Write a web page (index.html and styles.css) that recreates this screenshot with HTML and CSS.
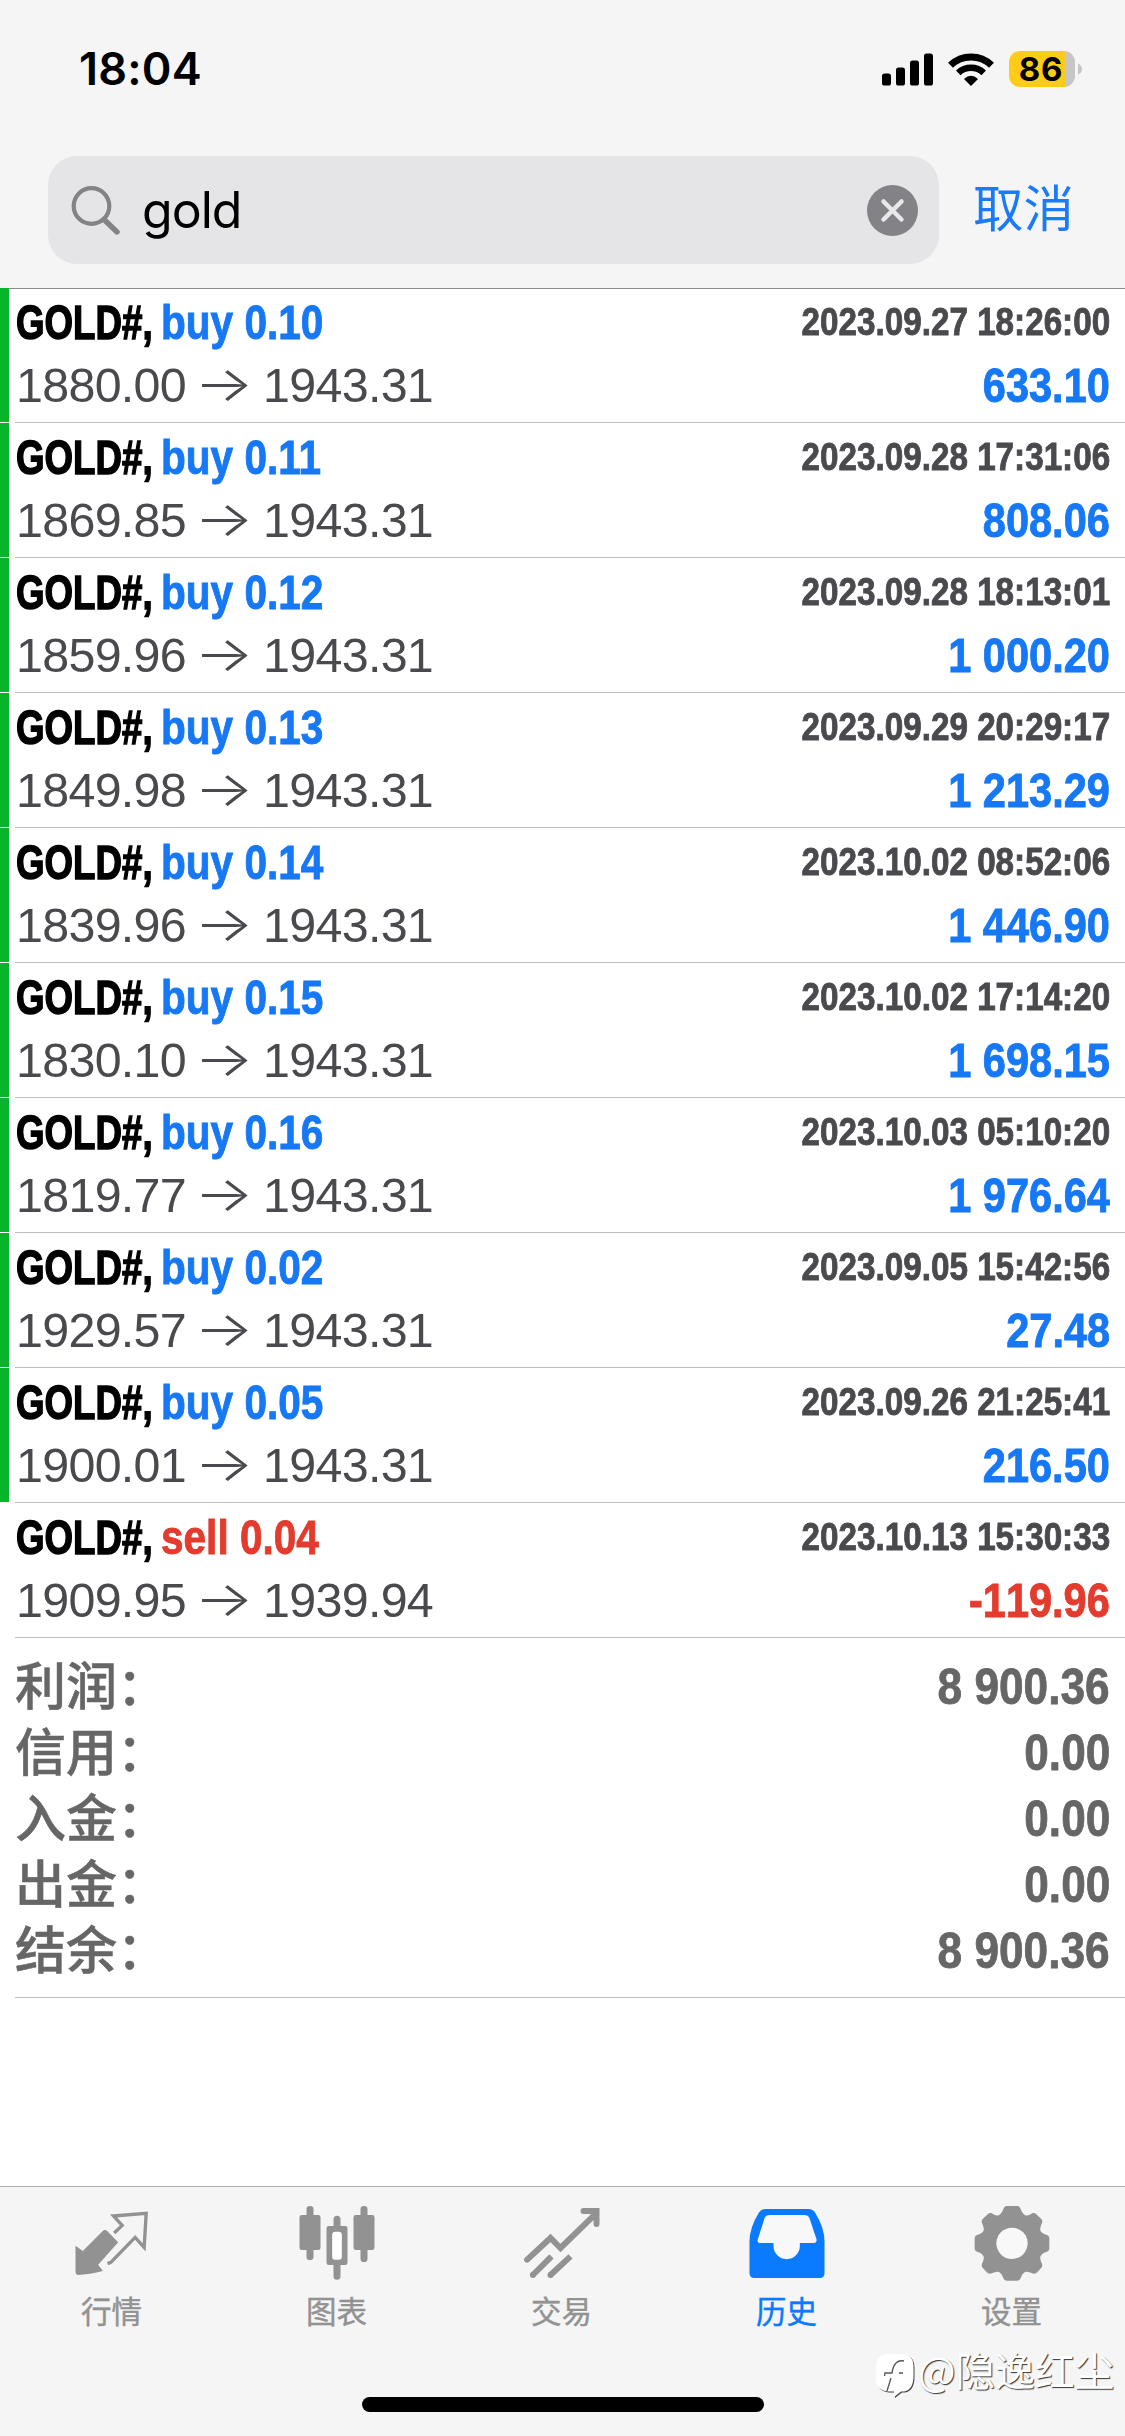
FILE: index.html
```html
<!DOCTYPE html>
<html lang="zh-CN">
<head>
<meta charset="utf-8">
<title>历史</title>
<link rel="stylesheet" href="styles.css">
</head>
<body>
<div class="screen">
  <header class="header">
    <div class="status">
      <span class="clock">18:04</span>
      <div class="indicators">
        <svg class="signal" viewBox="0 0 52 34"><rect x="0" y="21.500" width="9" height="12" rx="2.600"/><rect x="14" y="15.500" width="9" height="18" rx="2.600"/><rect x="28" y="8.500" width="9" height="25" rx="2.600"/><rect x="42" y="1.500" width="9" height="32" rx="2.600"/></svg>
        <svg class="wifi" viewBox="0 0 46 34"><g fill="none" stroke="#000"><path d="M2.500 13.200A29.500 29.500 0 0 1 43.500 13.200" stroke-width="7"/><path d="M10.300 20.800A18.500 18.500 0 0 1 35.700 20.800" stroke-width="6.600"/></g><path d="M23 34L16 27Q23 20.500 30 27Z"/></svg>
        <div class="battery"><span class="level">86</span></div>
        <svg class="nub" viewBox="0 0 5 14"><path d="M0 0Q5 2 5 7T0 14Z" fill="#c6c6c8"/></svg>
      </div>
    </div>
    <div class="search">
      <div class="field">
        <svg class="glass" viewBox="0 0 50 50"><circle cx="20.500" cy="21" r="17.800" stroke-width="4.200"/><path d="M33 34.500L46 47" stroke-width="5.400"/></svg>
        <span class="query">gold</span>
        <svg class="clear" viewBox="0 0 51 51"><circle cx="25.500" cy="25.500" r="25.500"/><path d="M16.500 16.500L34.500 34.500M34.500 16.500L16.500 34.500"/></svg>
      </div>
      <span class="cancel">取消</span>
    </div>
  </header>

  <main class="list">
    <div class="deal win"><div class="line"><span class="symbol"><b>GOLD#,</b></span><b class="side buy">buy 0.10</b><b class="time">2023.09.27 18:26:00</b></div><div class="line"><span class="price">1880.00</span><span class="arrow">→</span><span class="price">1943.31</span><b class="profit buy">633.10</b></div></div>
    <div class="deal win"><div class="line"><span class="symbol"><b>GOLD#,</b></span><b class="side buy">buy 0.11</b><b class="time">2023.09.28 17:31:06</b></div><div class="line"><span class="price">1869.85</span><span class="arrow">→</span><span class="price">1943.31</span><b class="profit buy">808.06</b></div></div>
    <div class="deal win"><div class="line"><span class="symbol"><b>GOLD#,</b></span><b class="side buy">buy 0.12</b><b class="time">2023.09.28 18:13:01</b></div><div class="line"><span class="price">1859.96</span><span class="arrow">→</span><span class="price">1943.31</span><b class="profit buy">1 000.20</b></div></div>
    <div class="deal win"><div class="line"><span class="symbol"><b>GOLD#,</b></span><b class="side buy">buy 0.13</b><b class="time">2023.09.29 20:29:17</b></div><div class="line"><span class="price">1849.98</span><span class="arrow">→</span><span class="price">1943.31</span><b class="profit buy">1 213.29</b></div></div>
    <div class="deal win"><div class="line"><span class="symbol"><b>GOLD#,</b></span><b class="side buy">buy 0.14</b><b class="time">2023.10.02 08:52:06</b></div><div class="line"><span class="price">1839.96</span><span class="arrow">→</span><span class="price">1943.31</span><b class="profit buy">1 446.90</b></div></div>
    <div class="deal win"><div class="line"><span class="symbol"><b>GOLD#,</b></span><b class="side buy">buy 0.15</b><b class="time">2023.10.02 17:14:20</b></div><div class="line"><span class="price">1830.10</span><span class="arrow">→</span><span class="price">1943.31</span><b class="profit buy">1 698.15</b></div></div>
    <div class="deal win"><div class="line"><span class="symbol"><b>GOLD#,</b></span><b class="side buy">buy 0.16</b><b class="time">2023.10.03 05:10:20</b></div><div class="line"><span class="price">1819.77</span><span class="arrow">→</span><span class="price">1943.31</span><b class="profit buy">1 976.64</b></div></div>
    <div class="deal win"><div class="line"><span class="symbol"><b>GOLD#,</b></span><b class="side buy">buy 0.02</b><b class="time">2023.09.05 15:42:56</b></div><div class="line"><span class="price">1929.57</span><span class="arrow">→</span><span class="price">1943.31</span><b class="profit buy">27.48</b></div></div>
    <div class="deal win"><div class="line"><span class="symbol"><b>GOLD#,</b></span><b class="side buy">buy 0.05</b><b class="time">2023.09.26 21:25:41</b></div><div class="line"><span class="price">1900.01</span><span class="arrow">→</span><span class="price">1943.31</span><b class="profit buy">216.50</b></div></div>
    <div class="deal"><div class="line"><span class="symbol"><b>GOLD#,</b></span><b class="side sell">sell 0.04</b><b class="time">2023.10.13 15:30:33</b></div><div class="line"><span class="price">1909.95</span><span class="arrow">→</span><span class="price">1939.94</span><b class="profit sell">-119.96</b></div></div>

    <div class="summary">
      <div class="total"><span class="name">利润：</span><b class="sum">8 900.36</b></div>
      <div class="total"><span class="name">信用：</span><b class="sum">0.00</b></div>
      <div class="total"><span class="name">入金：</span><b class="sum">0.00</b></div>
      <div class="total"><span class="name">出金：</span><b class="sum">0.00</b></div>
      <div class="total"><span class="name">结余：</span><b class="sum">8 900.36</b></div>
    </div>
  </main>

  <nav class="tabs">
    <div class="tab">
      <svg class="icon" viewBox="214.500 99 240 240"><path d="M225 227L247 243L306 184Q313 176 320 183L353 217L293 284L307 303Q268 314 232 315Q225 314 225 307Z"/><path class="outline" d="M341 189L365 166L339 138L437 130L431 232L404 202L331 277L321 281" stroke-width="10"/></svg>
      <span class="label">行情</span>
    </div>
    <div class="tab">
      <svg class="icon" viewBox="889.500 99 240 240"><rect x="897" y="135" width="63" height="105" rx="7"/><rect x="918" y="108" width="21" height="162" rx="10"/><rect x="1059" y="135" width="63" height="105" rx="7"/><rect x="1080" y="108" width="21" height="168" rx="10"/><path d="M999 168V148a10.500 10.500 0 0 1 21 0V168H1034q7 0 7 7V278q0 7-7 7H1020V319a10.500 10.500 0 0 1-21 0V285H985q-7 0-7-7V175q0-7 7-7Z"/><rect x="995" y="185" width="29" height="84" rx="9" fill="#fff"/></svg>
      <span class="label">图表</span>
    </div>
    <div class="tab">
      <svg class="icon" viewBox="304.500 99 240 240"><g class="outline" stroke-width="18"><path d="M320 269L390 204L420 234L526 131M489 123H528V162" stroke-linecap="round" stroke-linejoin="miter"/><path d="M393 259L337 315M450 259L390 315"/><path d="M337 315h.1M390 315h.1" stroke-linecap="round"/></g></svg>
      <span class="label">交易</span>
    </div>
    <div class="tab active">
      <svg class="icon" viewBox="979.500 99 240 240"><path d="M1034 117H1165Q1177 117 1184 128Q1212 173 1212 214V310Q1212 324 1198 324H1001Q987 324 987 310V214Q987 173 1015 128Q1022 117 1034 117Z"/><path d="M1048 135H1151Q1163 135 1167 145L1188 208Q1190 219 1181 219H1138V228A39.500 39.500 0 0 1 1059 228V219H1019Q1008 219 1012 208L1032 145Q1036 135 1048 135Z" fill="#f8f8f8"/></svg>
      <span class="label">历史</span>
    </div>
    <div class="tab">
      <svg class="icon" viewBox="394.500 99 240 240"><g transform="translate(514.500 220)"><path fill-rule="evenodd" d="M-16-112H16Q22-112 25-105Q31-88 40-84Q47-81 62-91Q68-92 73-87L87-74Q93-68 90-61Q82-45 86-36Q90-29 105-25Q112-22 112-16V16Q112 22 105 25Q90 29 86 38Q82 45 90 61Q93 68 87 75L74 88Q68 93 61 90Q47 83 39 86Q31 90 26 105Q23 112 16 112H-16Q-23 112-26 105Q-31 90-39 86Q-47 83-61 90Q-68 93-74 88L-87 75Q-93 68-90 61Q-82 45-86 38Q-90 29-105 25Q-112 22-112 16V-16Q-112-22-105-25Q-90-29-86-36Q-82-45-90-61Q-93-68-87-74L-73-87Q-68-92-62-91Q-47-81-40-84Q-31-88-25-105Q-22-112-16-112Z"/><circle r="47" fill="#f8f8f8"/></g></svg>
      <span class="label">设置</span>
    </div>
  </nav>
  <div class="home"></div>

  <div class="credit">
    <svg class="mark" viewBox="0 0 40 46"><path class="bubble" d="M13 1H27Q38 1 38.500 13V24Q38 37 29 38.500H26L19 44V38.500H13Q1 37 1 26V13Q2 1 13 1Z"/><path class="stem" d="M29 8Q19 6 17 20H10L9.500 23M16 25L12 38M24 20H28"/></svg>
    <span>@隐逸红尘</span>
  </div>
</div>
</body>
</html>
```
FILE: styles.css
```css
* { box-sizing: border-box; }
body { margin: 0; background: #fff; }
svg { display: block; flex: none; }

.screen {
  position: relative;
  display: flex;
  flex-direction: column;
  width: 1125px;
  height: 2436px;
  overflow: hidden;
  background: #fff;
  font-family: "Liberation Sans", "Noto Sans CJK SC", sans-serif;
}

/* Status bar and search */
.header {
  flex: none;
  height: 289px;
  background: #f5f5f5;
  border-bottom: 1px solid #8c8c8e;
}
.status {
  display: flex;
  justify-content: space-between;
  height: 156px;
  padding: 51px 43px 0 79px;
}
.clock {
  font: 600 45px/36px "Inter", sans-serif;
  letter-spacing: 0.2px;
}
.indicators { display: flex; height: 36px; align-items: center; }
.signal { width: 52px; height: 34px; margin-right: 14px; }
.wifi { width: 46px; height: 34px; margin-right: 15px; }
.battery {
  width: 66px;
  height: 36px;
  border-radius: 11px;
  background: linear-gradient(90deg, #fecb16 57px, #c6c6c8 57px);
  text-align: center;
}
.level { font: 700 33px/36px "Inter", sans-serif; letter-spacing: 0.8px; margin-right: 2px; }
.nub { width: 4px; height: 14px; margin-left: 3px; }

.search { display: flex; align-items: center; height: 108px; padding-left: 48px; }
.field {
  display: flex;
  align-items: center;
  width: 891px;
  height: 108px;
  padding: 0 21px 0 23px;
  border-radius: 29px;
  background: #e5e5e7;
}
.glass { width: 50px; height: 50px; fill: none; stroke: #838387; stroke-linecap: round; }
.query {
  flex: 1;
  margin-left: 21px;
  font: 400 50px/60px "Inter", sans-serif;
  letter-spacing: -1px;
}
.clear { width: 51px; height: 51px; fill: #838387; stroke: #e9e9eb; stroke-width: 4.5; stroke-linecap: round; }
.clear circle { stroke: none; }
.cancel {
  margin: 0 0 10px 34px;
  font: 400 50.500px/60px "Noto Sans CJK SC", sans-serif;
  color: #1a7af8;
}

/* Deals */
.list { flex: none; margin-top: -1px; height: 1899px; }
.deal {
  position: relative;
  height: 135px;
  padding: 3px 15px 0;
  background: linear-gradient(#bebec0, #bebec0) 15px 100% / 100% 1px no-repeat;
}
.win::before {
  content: "";
  position: absolute;
  inset: 0 auto 1px 0;
  width: 9px;
  background: #07b42a;
}
.line { display: flex; height: 63px; font-size: 48px; line-height: 63px; white-space: pre; }
.line b { -webkit-text-stroke: 0.9px currentColor; }
.symbol { width: 146px; padding-left: 1px; }
.symbol b { display: inline-block; transform: scaleX(.765); transform-origin: 0 0; color: #000; }
.line .symbol b { -webkit-text-stroke-width: 1.5px; }
.side { transform: scaleX(.845); transform-origin: 0 0; }
.time {
  margin-left: auto;
  font-size: 39px;
  line-height: 61px;
  color: #4a4a4e;
  transform: scaleX(.852);
  transform-origin: 100% 0;
}
.price { color: #4a4a4e; font-size: 48.4px; letter-spacing: -0.7px; padding-left: 1px; }
.arrow {
  width: 76px;
  text-align: center;
  font-family: "Inter", sans-serif;
  font-weight: 300;
  color: #4a4a4e;
  line-height: 59px;
  transform: scaleX(1.3);
}
.line .profit { margin-left: auto; font-kerning: none; transform: scaleX(.865); transform-origin: 100% 0; }
.buy { color: #1678f5; }
.sell { color: #e33b2e; }

/* Totals */
.summary {
  height: 360px;
  padding: 15px 15px 0;
  background: linear-gradient(#bebec0, #bebec0) 15px 100% / 100% 1px no-repeat;
  color: #666;
}
.total { display: flex; justify-content: space-between; height: 66px; line-height: 66px; }
.name {
  margin-top: -3px;
  font: 500 51px/66px "Noto Sans CJK SC", sans-serif;
  -webkit-text-stroke: 0.5px currentColor;
}
.sum { margin-top: 1px; font-size: 50.500px; transform: scaleX(.875); transform-origin: 100% 0; -webkit-text-stroke: 0.8px currentColor; }

/* Tab bar */
.tabs {
  display: grid;
  grid-template-columns: repeat(5, 225px);
  flex: 1;
  margin-top: -1px;
  border-top: 1px solid #acacae;
  background: #f5f5f5;
}
.tab {
  display: flex;
  flex-direction: column;
  align-items: center;
  gap: 9px;
  padding: 16px 2px 0 0;
  color: #929292;
}
.tab.active { color: #0a7aff; }
.icon { width: 80px; height: 80px; fill: currentColor; }
.outline { fill: none; stroke: currentColor; }
.label { font: 400 30.500px/36px "Noto Sans CJK SC", sans-serif; -webkit-text-stroke: 0.4px currentColor; }
.home {
  position: absolute;
  left: 362px;
  top: 2397px;
  width: 402px;
  height: 15px;
  border-radius: 8px;
  background: #000;
}

/* Author credit laid over the tab bar */
.credit {
  position: absolute;
  left: 875px;
  top: 2340px;
  display: flex;
  align-items: flex-start;
  gap: 3px;
  color: #fff;
  font: 400 39.700px/58px "Noto Sans CJK SC", sans-serif;
  text-shadow: 1px 1px 1px #333;
  white-space: nowrap;
}
.mark { width: 40px; height: 46px; margin-top: 13px; }
.bubble { fill: #fff; filter: drop-shadow(1px 1px .5px #444); }
.stem { fill: none; stroke: #555; stroke-width: 1.3; }
```
